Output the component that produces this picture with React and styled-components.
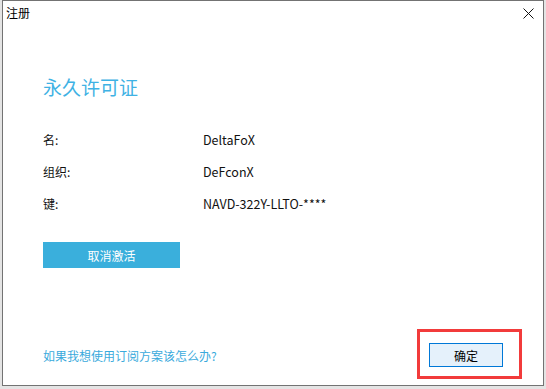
import styled, { createGlobalStyle } from "styled-components";

const GlobalStyle = createGlobalStyle`
  html, body {
    margin: 0;
    padding: 0;
    background: #e4e4e4;
  }
  body {
    font-family: "Noto Sans CJK SC", "Noto Sans", sans-serif;
  }
`;

const rows = [
  { label: "名:", value: "DeltaFoX" },
  { label: "组织:", value: "DeFconX" },
  { label: "键:", value: "NAVD-322Y-LLTO-****" },
];

const App = () => {
  return (
    <>
      <GlobalStyle />
      <Screen>
        <Window>
          <TitleBar>
            <Title>注册</Title>
            <CloseButton aria-label="关闭">
              <svg width="11" height="11" viewBox="0 0 11 11">
                <path d="M0.5 0.5 L10.5 10.5 M10.5 0.5 L0.5 10.5" stroke="#111" strokeWidth="1" fill="none" />
              </svg>
            </CloseButton>
          </TitleBar>
          <Content>
            <Heading>永久许可证</Heading>
            <InfoList>
              {rows.map((row) => (
                <InfoRow key={row.label}>
                  <Label>{row.label}</Label>
                  <Value>{row.value}</Value>
                </InfoRow>
              ))}
            </InfoList>
            <DeactivateButton>取消激活</DeactivateButton>
            <Footer>
              <HelpLink href="#">如果我想使用订阅方案该怎么办?</HelpLink>
              <Highlight>
                <OkButton>确定</OkButton>
              </Highlight>
            </Footer>
          </Content>
        </Window>
      </Screen>
    </>
  );
};

export default App;

const Screen = styled.div`
  width: 546px;
  height: 389px;
  padding-left: 2px;
  box-sizing: border-box;
  overflow: hidden;
`;

const Window = styled.div`
  width: 542px;
  height: 386px;
  box-sizing: border-box;
  border: 1px solid #737373;
  background: #ffffff;
  display: flex;
  flex-direction: column;
`;

const TitleBar = styled.div`
  height: 26px;
  display: flex;
  align-items: center;
  justify-content: space-between;
  padding: 0 9px 0 3px;
  flex-shrink: 0;
`;

const Title = styled.span`
  font-size: 12px;
  color: #000;
  line-height: 16px;
  margin-top: -2px;
`;

const CloseButton = styled.button`
  border: none;
  background: transparent;
  padding: 0;
  width: 11px;
  height: 11px;
  display: flex;
  margin-top: -2px;
  cursor: pointer;
`;

const Content = styled.div`
  flex: 1;
  display: flex;
  flex-direction: column;
  align-items: flex-start;
  padding: 48px 21px 6px 40px;
`;

const Heading = styled.h1`
  margin: 0;
  font-size: 19px;
  font-weight: 400;
  line-height: 24px;
  color: #3fb2e4;
`;

const InfoList = styled.div`
  margin-top: 24px;
  display: flex;
  flex-direction: column;
`;

const InfoRow = styled.div`
  display: flex;
  height: 32px;
  align-items: center;
  font-size: 12px;
  color: #111;
`;

const Label = styled.span`
  width: 160px;
`;

const Value = styled.span`
  font-size: 12.5px;
`;

const DeactivateButton = styled.button`
  margin-top: 23px;
  width: 137px;
  height: 26px;
  border: none;
  background: #3aafdc;
  color: #fff;
  font-family: inherit;
  font-size: 12px;
  padding: 0;
  cursor: pointer;
`;

const Footer = styled.div`
  margin-top: auto;
  align-self: stretch;
  display: flex;
  align-items: center;
  justify-content: space-between;
`;

const HelpLink = styled.a`
  font-size: 12px;
  color: #3aaadc;
  text-decoration: none;
  margin-top: 3px;
`;

const Highlight = styled.div`
  border: 3px solid #f23b3b;
  padding: 11px 16px 9px 9px;
  display: flex;
`;

const OkButton = styled.button`
  width: 74px;
  height: 24px;
  box-sizing: border-box;
  border: 1px solid #0078d7;
  background: #e5f1fb;
  color: #000;
  font-family: inherit;
  font-size: 12px;
  padding: 0;
  cursor: pointer;
`;
